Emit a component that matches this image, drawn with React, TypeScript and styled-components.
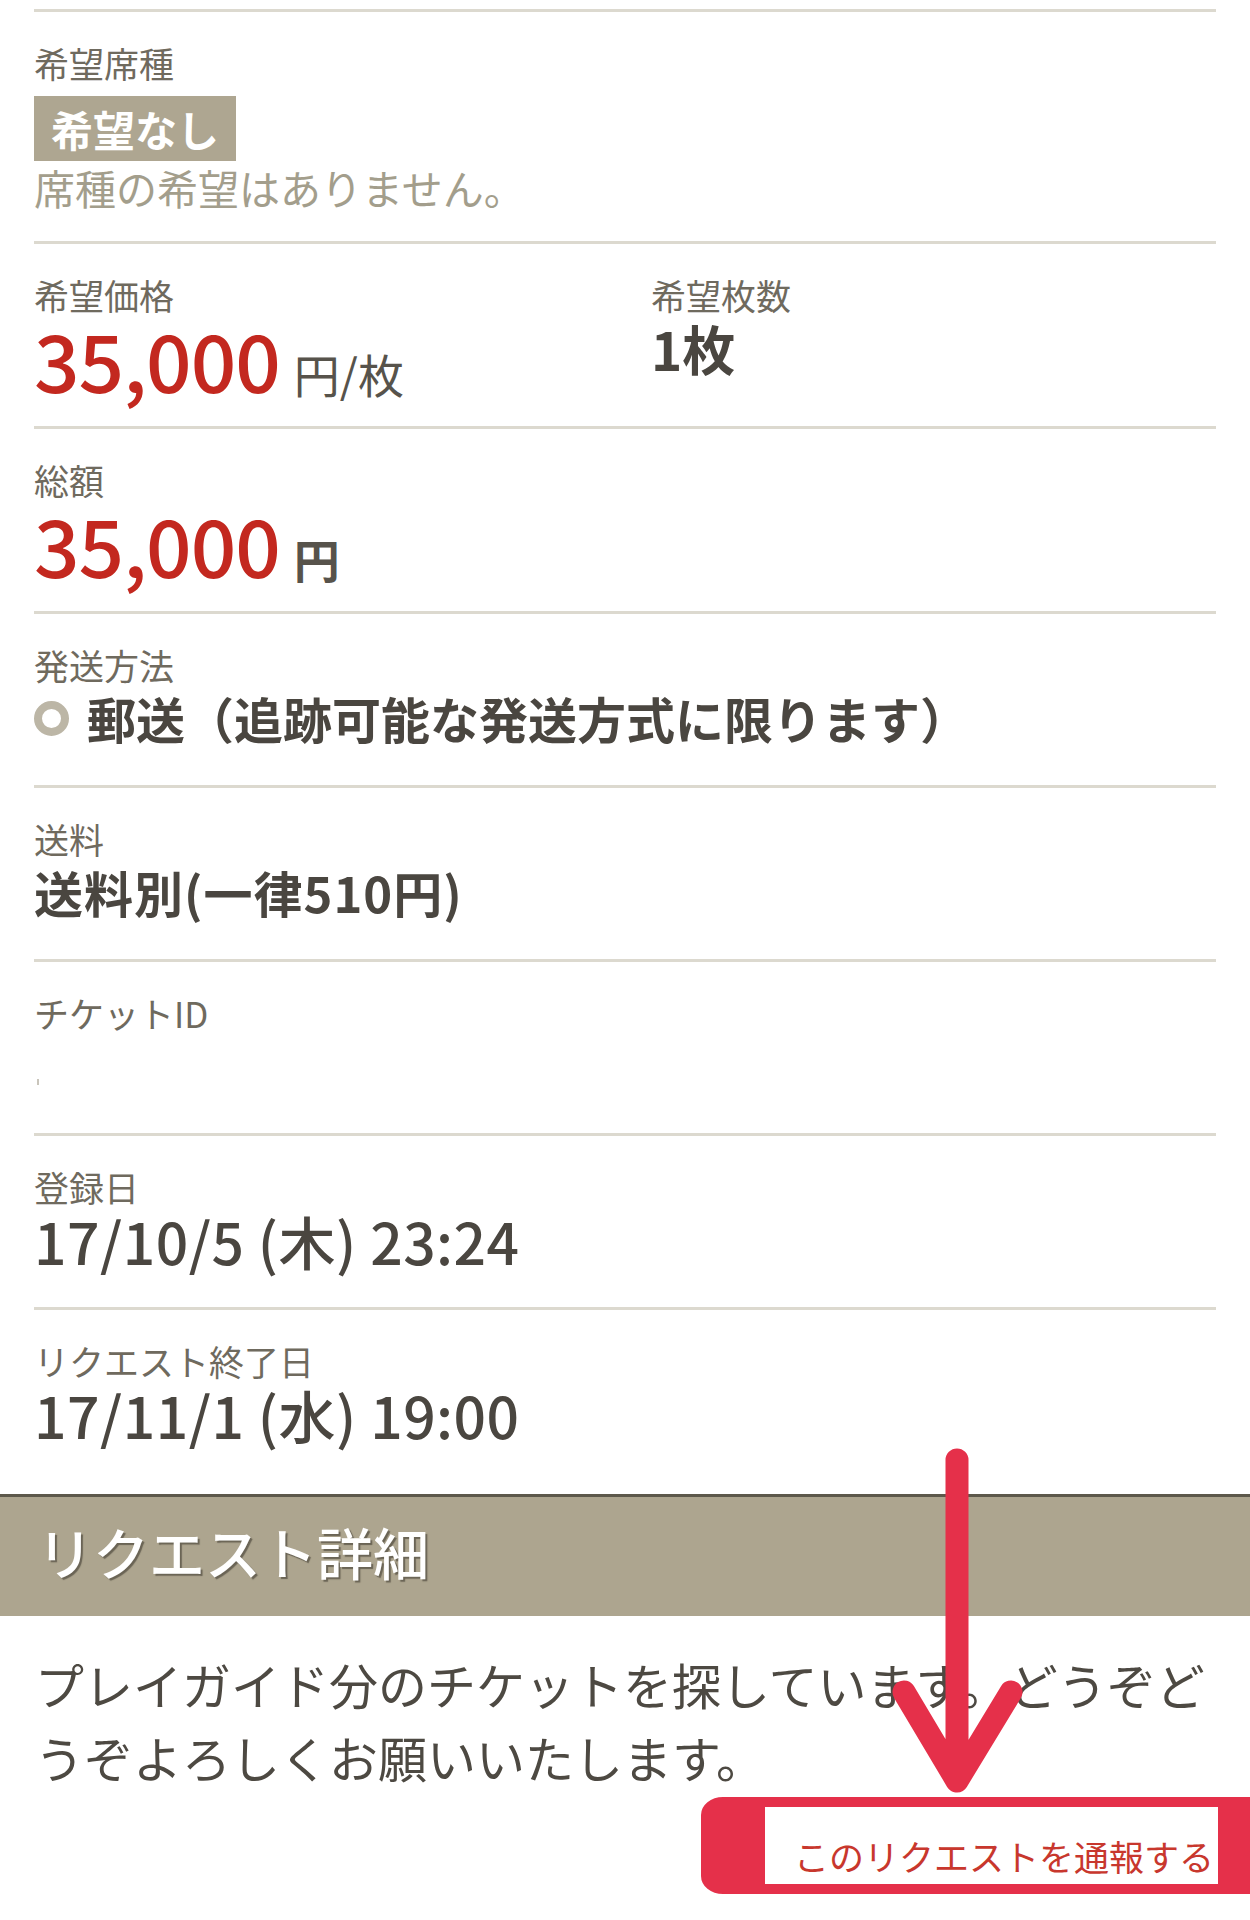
import React from 'react';
import styled, { createGlobalStyle } from 'styled-components';

const GlobalStyle = createGlobalStyle`
  html, body {
    margin: 0;
    padding: 0;
    background: #fff;
  }
  body {
    font-family: "Noto Sans CJK JP", "Noto Sans", sans-serif;
    color: #4a4640;
  }
  * {
    box-sizing: border-box;
  }
`;

const palette = {
  line: '#dcd9cf',
  label: '#6f6a5e',
  muted: '#a39e8c',
  text: '#4a4640',
  price: '#c3281f',
  tan: '#ada58f',
  marker: '#e5304a',
};

function App() {
  return (
    <>
      <GlobalStyle />
      <Page>
        <InfoList>
          <Section $bottom={28}>
            <Label>希望席種</Label>
            <Badge>希望なし</Badge>
            <Description>席種の希望はありません。</Description>
          </Section>

          <Section $bottom={26}>
            <Columns>
              <div>
                <Label>希望価格</Label>
                <PriceLine>
                  <Amount>35,000</Amount>
                  <Unit>円/枚</Unit>
                </PriceLine>
              </div>
              <div>
                <Label>希望枚数</Label>
                <Count>1枚</Count>
              </div>
            </Columns>
          </Section>

          <Section $bottom={26}>
            <Label>総額</Label>
            <PriceLine>
              <Amount>35,000</Amount>
              <Unit $bold>円</Unit>
            </PriceLine>
          </Section>

          <Section>
            <Label>発送方法</Label>
            <RadioLine>
              <Radio />
              <BoldValue>郵送（追跡可能な発送方式に限ります）</BoldValue>
            </RadioLine>
          </Section>

          <Section>
            <Label>送料</Label>
            <BoldValue $wide>送料別(一律510円)</BoldValue>
          </Section>

          <Section>
            <Label>チケットID</Label>
            <EmptyValue>
              <Tick />
            </EmptyValue>
          </Section>

          <Section>
            <Label>登録日</Label>
            <DateValue>17/10/5 (木) 23:24</DateValue>
          </Section>

          <Section $bottom={48}>
            <Label>リクエスト終了日</Label>
            <DateValue>17/11/1 (水) 19:00</DateValue>
          </Section>
        </InfoList>

        <HeaderBar>リクエスト詳細</HeaderBar>

        <Body>
          プレイガイド分のチケットを探しています。どうぞどうぞよろしくお願いいたします。
        </Body>

        <ReportRow>
          <ReportFrame>
            <ReportLink>このリクエストを通報する</ReportLink>
          </ReportFrame>
        </ReportRow>

        <Arrow viewBox="0 0 160 370" width="160" height="370">
          <path
            d="M77 30 L77 345 M24 262 L77 351 L131 262"
            fill="none"
            stroke={palette.marker}
            strokeWidth="23"
            strokeLinecap="round"
            strokeLinejoin="round"
          />
        </Arrow>
      </Page>
    </>
  );
}

export default App;

const Page = styled.div`
  position: relative;
  width: 1250px;
  height: 1920px;
  overflow: hidden;
  padding-top: 9px;
`;

const InfoList = styled.div`
  padding: 0 34px;
`;

const Section = styled.div<{ $bottom?: number }>`
  border-top: 3px solid ${palette.line};
  padding: 30px 0 ${({ $bottom }) => $bottom ?? 35}px;
`;

const Label = styled.div`
  font-size: 35px;
  line-height: 42px;
  color: ${palette.label};
`;

const Badge = styled.div`
  width: fit-content;
  margin-top: 12px;
  padding: 0 17px;
  background: #aea691;
  color: #fff;
  font-size: 42px;
  font-weight: 700;
  line-height: 65px;
`;

const Description = styled.div`
  font-size: 41px;
  line-height: 52px;
  color: ${palette.muted};
`;

const Columns = styled.div`
  display: grid;
  grid-template-columns: 617px 1fr;
`;

const PriceLine = styled.div`
  display: flex;
  align-items: baseline;
  height: 84px;
`;

const Amount = styled.span`
  font-size: 80px;
  font-weight: 500;
  line-height: 84px;
  letter-spacing: -1px;
  color: ${palette.price};
`;

const Unit = styled.span<{ $bold?: boolean }>`
  margin-left: 14px;
  font-size: 46px;
  font-weight: ${({ $bold }) => ($bold ? 700 : 400)};
  color: #57534b;
`;

const Count = styled.div`
  font-size: 53px;
  font-weight: 700;
  line-height: 64px;
  color: ${palette.text};
`;

const RadioLine = styled.div`
  display: flex;
  align-items: center;
  gap: 18px;
`;

const Radio = styled.span`
  width: 35px;
  height: 35px;
  border-radius: 50%;
  border: 8px solid #bcb6a6;
  background: #fff;
  flex: none;
`;

const BoldValue = styled.div<{ $wide?: boolean }>`
  font-size: 49px;
  font-weight: 700;
  line-height: 64px;
  letter-spacing: ${({ $wide }) => ($wide ? '1px' : '0')};
  color: ${palette.text};
`;

const EmptyValue = styled.div`
  height: 64px;
  padding-top: 45px;
`;

const Tick = styled.span`
  display: block;
  width: 2px;
  height: 6px;
  margin-left: 3px;
  background: #c9c5bb;
`;

const DateValue = styled.div`
  font-size: 57px;
  font-weight: 500;
  line-height: 64px;
  letter-spacing: 0.5px;
  color: ${palette.text};
`;

const HeaderBar = styled.div`
  display: flex;
  align-items: center;
  height: 122px;
  padding: 0 0 12px 37px;
  border-top: 3px solid #5d584b;
  background: ${palette.tan};
  color: #fff;
  font-size: 56px;
  font-weight: 500;
  text-shadow: 2px 2px 1px #6a6455;
`;

const Body = styled.p`
  margin: 0;
  padding: 31px 35px 0;
  font-size: 49px;
  line-height: 73px;
  color: #4d4942;
`;

const ReportRow = styled.div`
  display: flex;
  justify-content: flex-end;
  padding-top: 4px;
`;

const ReportFrame = styled.div`
  display: flex;
  justify-content: flex-end;
  align-items: flex-end;
  width: 549px;
  height: 97px;
  padding: 0 4px 8px 0;
  border-style: solid;
  border-color: ${palette.marker};
  border-width: 10px 32px 10px 64px;
  border-radius: 22px 0 0 22px / 18px 0 0 18px;
  background: #fff;
`;

const ReportLink = styled.span`
  font-size: 35px;
  line-height: 40px;
  color: #c8372d;
`;

const Arrow = styled.svg`
  position: absolute;
  left: 880px;
  top: 1430px;
`;
